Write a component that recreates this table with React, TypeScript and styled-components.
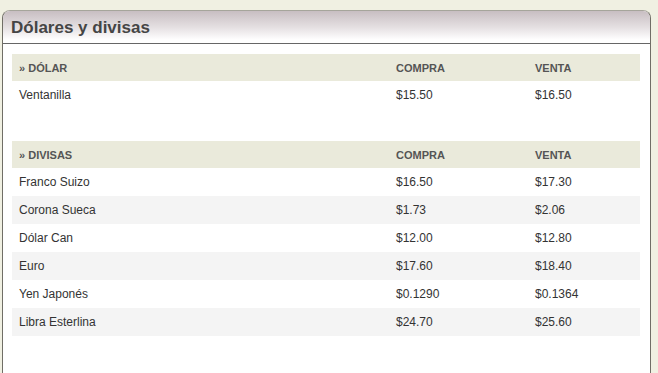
import React from "react";
import styled, { createGlobalStyle } from "styled-components";

const Global = createGlobalStyle`
  html, body { margin: 0; padding: 0; background: #f0f0e2; }
  body { font-family: "Liberation Sans", Arial, sans-serif; overflow: hidden; }
`;

const Page = styled.div`
  padding: 10px 0 0 2px;
  width: 658px;
  height: 373px;
  box-sizing: border-box;
  overflow: hidden;
`;

const Panel = styled.section`
  width: 649px;
  min-height: 400px;
  box-sizing: border-box;
  background: #ffffff;
  border: 1px solid #706e66;
  border-top-color: #a6a59b;
  border-radius: 8px 8px 0 0;
  overflow: hidden;
`;

const Header = styled.header`
  height: 32px;
  display: flex;
  align-items: center;
  padding-left: 8px;
  border-bottom: 1px solid #666666;
  background: linear-gradient(to bottom, #c8bec2 0%, #e4dfe1 50%, #ffffff 90%);
`;

const Title = styled.h2`
  margin: 0;
  padding-top: 2px;
  font-size: 17px;
  font-weight: bold;
  color: #454545;
`;

const Body = styled.div`
  padding: 10px 9px 0 9px;
  display: flex;
  flex-direction: column;
  gap: 32px;
`;

const Table = styled.table`
  width: 628px;
  border-collapse: collapse;
  table-layout: fixed;
`;

const HeadCell = styled.th<{ $w: number }>`
  width: ${(p) => p.$w}px;
  height: 27px;
  padding: 0 0 0 7px;
  text-align: left;
  background: #eaeadb;
  font-size: 11px;
  font-weight: bold;
  color: #555555;
  box-sizing: border-box;
`;

const Row = styled.tr<{ $alt: boolean }>`
  background: ${(p) => (p.$alt ? "#f4f4f4" : "#ffffff")};
`;

const Cell = styled.td`
  height: 28px;
  padding: 0 0 0 7px;
  font-size: 12px;
  color: #333333;
  box-sizing: border-box;
`;

type Rate = [string, string, string];

const dolar: Rate[] = [["Ventanilla", "$15.50", "$16.50"]];
const divisas: Rate[] = [
  ["Franco Suizo", "$16.50", "$17.30"],
  ["Corona Sueca", "$1.73", "$2.06"],
  ["Dólar Can", "$12.00", "$12.80"],
  ["Euro", "$17.60", "$18.40"],
  ["Yen Japonés", "$0.1290", "$0.1364"],
  ["Libra Esterlina", "$24.70", "$25.60"],
];

function RateTable({ title, rows }: { title: string; rows: Rate[] }) {
  return (
    <Table>
      <thead>
        <tr>
          <HeadCell $w={377}>» {title}</HeadCell>
          <HeadCell $w={139}>COMPRA</HeadCell>
          <HeadCell $w={112}>VENTA</HeadCell>
        </tr>
      </thead>
      <tbody>
        {rows.map((r, i) => (
          <Row key={r[0]} $alt={i % 2 === 1}>
            <Cell>{r[0]}</Cell>
            <Cell>{r[1]}</Cell>
            <Cell>{r[2]}</Cell>
          </Row>
        ))}
      </tbody>
    </Table>
  );
}

export default function App() {
  return (
    <>
      <Global />
      <Page>
        <Panel>
          <Header>
            <Title>Dólares y divisas</Title>
          </Header>
          <Body>
            <RateTable title="DÓLAR" rows={dolar} />
            <RateTable title="DIVISAS" rows={divisas} />
          </Body>
        </Panel>
      </Page>
    </>
  );
}
